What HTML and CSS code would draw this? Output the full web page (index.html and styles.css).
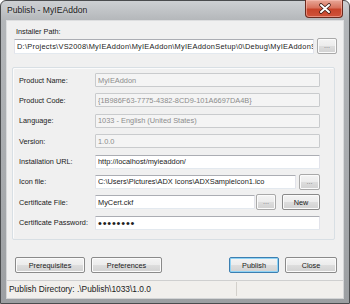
FILE: index.html
```html
<!DOCTYPE html>
<html lang="en">
<head>
  <meta charset="UTF-8" />
  <title>Publish - MyIEAddon</title>
  <link rel="stylesheet" href="styles.css">
</head>
<body>

  <div class="janela">
    <!-- BARRA DE TITULO -->
    <div class="titulo">
      <span class="titulo-texto">Publish - MyIEAddon</span>
      <div class="botao-fechar">
        <svg width="38" height="17" viewBox="0 0 38 17">
          <path d="M15 5 L23 12 M23 5 L15 12" stroke="#3a1a14" stroke-width="3.6" stroke-linecap="round"/>
          <path d="M15 5 L23 12 M23 5 L15 12" stroke="#ffffff" stroke-width="2" stroke-linecap="round"/>
        </svg>
      </div>
    </div>

    <div class="cliente">
      <div class="conteudo">
        <div class="rotulo-caminho">Installer Path:</div>
        <div class="linha-caminho">
          <input class="campo campo-caminho" type="text" value="D:\Projects\VS2008\MyIEAddon\MyIEAddon\MyIEAddonSetup\0\Debug\MyIEAddonSetup.msi">
          <button class="botao botao-pontos">...</button>
        </div>

        <div class="grupo">
          <label>Product Name:</label>
          <input class="campo desativado" type="text" value="MyIEAddon" disabled>

          <label>Product Code:</label>
          <input class="campo desativado" type="text" value="{1B986F63-7775-4382-8CD9-101A6697DA4B}" disabled>

          <label>Language:</label>
          <input class="campo desativado" type="text" value="1033 - English (United States)" disabled>

          <label>Version:</label>
          <input class="campo desativado" type="text" value="1.0.0" disabled>

          <label>Installation URL:</label>
          <input class="campo" type="text" value="http://localhost/myieaddon/">

          <label>Icon file:</label>
          <div class="linha-botoes">
            <input class="campo" type="text" value="C:\Users\Pictures\ADX Icons\ADXSampleIcon1.ico">
            <button class="botao botao-pontos icone">...</button>
          </div>

          <label>Certificate File:</label>
          <div class="linha-botoes">
            <input class="campo" type="text" value="MyCert.ckf">
            <button class="botao botao-pontos cert">...</button>
            <button class="botao botao-novo">New</button>
          </div>

          <label>Certificate Password:</label>
          <div class="campo senha">••••••••</div>
        </div>

        <div class="acoes">
          <button class="botao largo-1">Prerequisites</button>
          <button class="botao largo-2">Preferences</button>
          <span class="espaco"></span>
          <button class="botao padrao largo-3">Publish</button>
          <button class="botao largo-4">Close</button>
        </div>
      </div>

      <div class="status">
        <div class="status-texto">Publish Directory: .\Publish\1033\1.0.0</div>
        <div class="status-resto"></div>
      </div>
    </div>
  </div>

</body>
</html>
```

FILE: styles.css
```css
body {
  margin: 0;
  width: 350px;
  height: 304px;
  overflow: hidden;
  background: #ffffff;
  font-family: "Liberation Sans", Arial, sans-serif;
}

.janela {
  width: 350px;
  height: 304px;
  box-sizing: border-box;
  border: 1px solid #4a4c4e;
  border-radius: 6px 6px 0 0;
  background: linear-gradient(#cdd0d3, #b3b6b9 20px, #a7aaad 60%, #9c9fa2);
  padding: 0 6px 5px 6px;
  display: flex;
  flex-direction: column;
}

.titulo {
  height: 20px;
  display: flex;
  align-items: flex-start;
}

.titulo-texto {
  font-size: 8.6px;
  line-height: 19px;
  color: #202020;
  text-shadow: 0 0 4px rgba(255, 255, 255, 0.6);
}

.botao-fechar {
  margin-left: auto;
  margin-top: -1px;
  width: 38px;
  height: 18px;
  box-sizing: border-box;
  border: 1px solid #6b2a1e;
  border-top: none;
  border-radius: 0 0 4px 4px;
  background: linear-gradient(#e8a898, #d8735e 45%, #c7442a 55%, #d0533a);
  box-shadow: inset 0 0 0 1px rgba(255, 200, 190, 0.5);
}

.botao-fechar svg {
  display: block;
}

.cliente {
  flex: 1;
  background: #f0f0f0;
  display: flex;
  flex-direction: column;
  box-shadow: 0 0 0 1px rgba(255, 255, 255, 0.55);
}

.conteudo {
  flex: 1;
  padding: 5px 6px 0 5px;
}

.rotulo-caminho {
  margin-left: 4px;
  height: 12px;
  line-height: 12px;
  font-size: 7.3px;
  color: #1a1a1a;
}

.linha-caminho {
  display: flex;
  align-items: center;
  gap: 3px;
  height: 16px;
  margin-left: 2px;
}

.campo {
  box-sizing: border-box;
  height: 14px;
  margin: 0;
  padding: 0 0 0 2px;
  font-family: "Liberation Sans", Arial, sans-serif;
  font-size: 7.4px;
  color: #1a1a1a;
  background: #ffffff;
  border: 1px solid #e2e3ea;
  border-top-color: #abadb3;
  border-bottom-color: #e3e9ef;
  border-radius: 1px;
  outline: none;
  min-width: 0;
}

.campo-caminho {
  width: 301px;
  height: 15px;
  letter-spacing: 0.27px;
}

.desativado {
  background: #f4f4f4;
  color: #8c8c8c;
  border: 1px solid #c9cbcd;
  -webkit-text-fill-color: #8c8c8c;
  opacity: 1;
}

.senha {
  display: flex;
  align-items: center;
  font-size: 11px;
  letter-spacing: 0.8px;
  line-height: 12px;
  color: #202020;
  overflow: hidden;
}

.botao {
  box-sizing: border-box;
  height: 16px;
  margin: 0;
  padding: 0;
  font-family: "Liberation Sans", Arial, sans-serif;
  font-size: 7.3px;
  color: #1a1a1a;
  border: 1px solid #8a8a8a;
  border-radius: 2px;
  background: linear-gradient(#f4f4f4, #ececec 48%, #dddddd 52%, #d1d1d1);
  box-shadow: inset 0 0 0 1px #fbfbfb;
  flex: none;
}

.botao-pontos {
  width: 20px;
  color: #777777;
  border-color: #a9a9a9;
  line-height: 12px;
}

.grupo {
  margin: 13px 2px 0 0;
  box-sizing: border-box;
  height: 173px;
  border: 1px solid #d8dfe4;
  border-radius: 2px;
  box-shadow: inset 1px 1px 0 #fbfbfb;
  padding: 5px 14px 0 6px;
  display: grid;
  grid-template-columns: 76px 1fr;
  grid-auto-rows: 14px;
  row-gap: 6.4px;
  align-items: center;
}

.grupo label {
  font-size: 7.3px;
  color: #1a1a1a;
  white-space: nowrap;
}

.linha-botoes {
  display: flex;
  align-items: center;
  height: 14px;
}

.linha-botoes .campo {
  flex: 1;
}

.icone {
  width: 21px;
  margin-left: 3px;
}

.cert {
  width: 20px;
  margin-left: 1px;
}

.botao-novo {
  width: 38px;
  margin-left: 6px;
  border-color: #8a8a8a;
}

.acoes {
  margin-top: 17px;
  margin-left: 3px;
  display: flex;
  gap: 6px;
  height: 16px;
}

.espaco {
  flex: 1;
}

.largo-1 { width: 70px; }
.largo-2 { width: 71px; }
.largo-3 { width: 50px; }
.largo-4 { width: 52px; }

.padrao {
  border-color: #3c7fb1;
  box-shadow: inset 0 0 0 1px #8fd3f5;
}

.status {
  height: 18px;
  box-sizing: border-box;
  border-top: 1px solid #cfcfcf;
  background: #f1efec;
  display: flex;
}

.status-texto {
  width: 230px;
  box-sizing: border-box;
  padding-left: 2px;
  border-right: 1px solid #d3d0cb;
  margin: 1px 0 2px 0;
  font-size: 8.4px;
  line-height: 14px;
  color: #1a1a1a;
  white-space: nowrap;
}

.status-resto {
  flex: 1;
}
```
